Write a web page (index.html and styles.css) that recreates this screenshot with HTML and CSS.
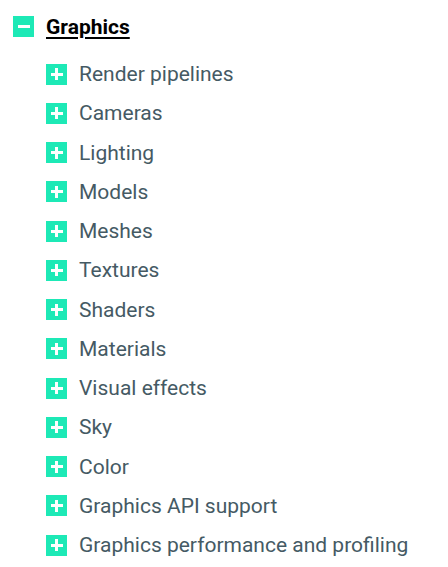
FILE: index.html
```html
<!DOCTYPE html>
<html>
<head>
<meta charset="utf-8">
<link rel="stylesheet" href="styles.css">
</head>
<body>
<div class="tree">
  <div class="node-head">
    <span class="toggle"><span class="bar-h"></span></span>
    <a class="head-label">Graphics</a>
  </div>
  <ul class="children">
    <li class="child"><span class="toggle"><span class="bar-h"></span><span class="bar-v"></span></span><span class="label">Render pipelines</span></li>
    <li class="child"><span class="toggle"><span class="bar-h"></span><span class="bar-v"></span></span><span class="label">Cameras</span></li>
    <li class="child"><span class="toggle"><span class="bar-h"></span><span class="bar-v"></span></span><span class="label">Lighting</span></li>
    <li class="child"><span class="toggle"><span class="bar-h"></span><span class="bar-v"></span></span><span class="label">Models</span></li>
    <li class="child"><span class="toggle"><span class="bar-h"></span><span class="bar-v"></span></span><span class="label">Meshes</span></li>
    <li class="child"><span class="toggle"><span class="bar-h"></span><span class="bar-v"></span></span><span class="label">Textures</span></li>
    <li class="child"><span class="toggle"><span class="bar-h"></span><span class="bar-v"></span></span><span class="label">Shaders</span></li>
    <li class="child"><span class="toggle"><span class="bar-h"></span><span class="bar-v"></span></span><span class="label">Materials</span></li>
    <li class="child"><span class="toggle"><span class="bar-h"></span><span class="bar-v"></span></span><span class="label">Visual effects</span></li>
    <li class="child"><span class="toggle"><span class="bar-h"></span><span class="bar-v"></span></span><span class="label">Sky</span></li>
    <li class="child"><span class="toggle"><span class="bar-h"></span><span class="bar-v"></span></span><span class="label">Color</span></li>
    <li class="child"><span class="toggle"><span class="bar-h"></span><span class="bar-v"></span></span><span class="label">Graphics API support</span></li>
    <li class="child"><span class="toggle"><span class="bar-h"></span><span class="bar-v"></span></span><span class="label">Graphics performance and profiling</span></li>
  </ul>
</div>
</body>
</html>
```

FILE: styles.css
```css
html, body {
  margin: 0;
  padding: 0;
  background: #ffffff;
}
body {
  font-family: Roboto, "Liberation Sans", sans-serif;
}
.tree {
  padding: 14px 0 0 13px;
}
.node-head {
  display: flex;
  align-items: center;
  gap: 12px;
  height: 24px;
}
.toggle {
  position: relative;
  flex: none;
  width: 21px;
  height: 21px;
  background: #1de9b6;
  display: flex;
  align-items: center;
  justify-content: center;
}
.bar-h {
  position: absolute;
  width: 12px;
  height: 3px;
  background: #ffffff;
}
.bar-v {
  position: absolute;
  width: 3px;
  height: 12px;
  background: #ffffff;
}
.head-label {
  font-size: 21px;
  font-weight: 700;
  color: #000000;
  text-decoration: underline;
  text-underline-offset: 3px;
  line-height: 24px;
  position: relative;
  top: 1px;
}
.children {
  list-style: none;
  margin: 0;
  padding: 24px 0 0 33px;
  display: flex;
  flex-direction: column;
  gap: 15.25px;
}
.child {
  display: flex;
  align-items: center;
  gap: 12px;
  height: 24px;
}
.label {
  font-size: 21px;
  color: #455a64;
  line-height: 24px;
}
```
